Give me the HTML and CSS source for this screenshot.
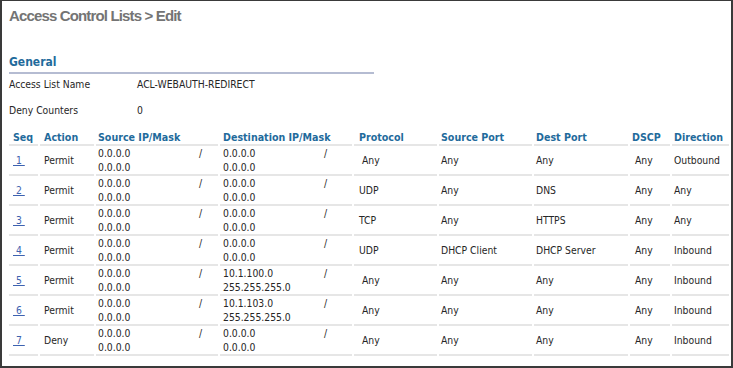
FILE: index.html
```html
<!DOCTYPE html>
<html lang="en">
<head>
    <meta charset="UTF-8">
    <meta name="viewport" content="width=device-width, initial-scale=1.0">
    <title>Access Control Lists &gt; Edit</title>
    <link rel="stylesheet" href="styles.css">
</head>
<body>
    <h1 class="page-title">Access Control Lists &gt; Edit</h1>

    <section class="general">
        <h2>General</h2>
        <div class="info-row">
            <span class="info-label">Access List Name</span>
            <span>ACL-WEBAUTH-REDIRECT</span>
        </div>
        <div class="info-row">
            <span class="info-label">Deny Counters</span>
            <span>0</span>
        </div>
    </section>

    <table class="rules">
        <colgroup>
            <col class="c-seq">
            <col class="c-action">
            <col class="c-src">
            <col class="c-dst">
            <col class="c-proto">
            <col class="c-sport">
            <col class="c-dport">
            <col class="c-dscp">
            <col class="c-dir">
        </colgroup>
        <thead>
            <tr>
                <th>Seq</th>
                <th>Action</th>
                <th>Source IP/Mask</th>
                <th>Destination IP/Mask</th>
                <th>Protocol</th>
                <th>Source Port</th>
                <th>Dest Port</th>
                <th>DSCP</th>
                <th>Direction</th>
            </tr>
        </thead>
        <tbody>
            <tr>
                <td><a href="#">&nbsp;1&nbsp;</a></td>
                <td>Permit</td>
                <td><div class="ip"><span class="addr">0.0.0.0<br>0.0.0.0</span><span class="slash">/</span></div></td>
                <td><div class="ip"><span class="addr">0.0.0.0<br>0.0.0.0</span><span class="slash">/</span></div></td>
                <td>&nbsp;Any</td>
                <td>Any</td>
                <td>Any</td>
                <td>&nbsp;Any</td>
                <td>Outbound</td>
            </tr>
            <tr>
                <td><a href="#">&nbsp;2&nbsp;</a></td>
                <td>Permit</td>
                <td><div class="ip"><span class="addr">0.0.0.0<br>0.0.0.0</span><span class="slash">/</span></div></td>
                <td><div class="ip"><span class="addr">0.0.0.0<br>0.0.0.0</span><span class="slash">/</span></div></td>
                <td>UDP</td>
                <td>Any</td>
                <td>DNS</td>
                <td>&nbsp;Any</td>
                <td>Any</td>
            </tr>
            <tr>
                <td><a href="#">&nbsp;3&nbsp;</a></td>
                <td>Permit</td>
                <td><div class="ip"><span class="addr">0.0.0.0<br>0.0.0.0</span><span class="slash">/</span></div></td>
                <td><div class="ip"><span class="addr">0.0.0.0<br>0.0.0.0</span><span class="slash">/</span></div></td>
                <td>TCP</td>
                <td>Any</td>
                <td>HTTPS</td>
                <td>&nbsp;Any</td>
                <td>Any</td>
            </tr>
            <tr>
                <td><a href="#">&nbsp;4&nbsp;</a></td>
                <td>Permit</td>
                <td><div class="ip"><span class="addr">0.0.0.0<br>0.0.0.0</span><span class="slash">/</span></div></td>
                <td><div class="ip"><span class="addr">0.0.0.0<br>0.0.0.0</span><span class="slash">/</span></div></td>
                <td>UDP</td>
                <td>DHCP Client</td>
                <td>DHCP Server</td>
                <td>&nbsp;Any</td>
                <td>Inbound</td>
            </tr>
            <tr>
                <td><a href="#">&nbsp;5&nbsp;</a></td>
                <td>Permit</td>
                <td><div class="ip"><span class="addr">0.0.0.0<br>0.0.0.0</span><span class="slash">/</span></div></td>
                <td><div class="ip"><span class="addr">10.1.100.0<br>255.255.255.0</span><span class="slash">/</span></div></td>
                <td>&nbsp;Any</td>
                <td>Any</td>
                <td>Any</td>
                <td>&nbsp;Any</td>
                <td>Inbound</td>
            </tr>
            <tr>
                <td><a href="#">&nbsp;6&nbsp;</a></td>
                <td>Permit</td>
                <td><div class="ip"><span class="addr">0.0.0.0<br>0.0.0.0</span><span class="slash">/</span></div></td>
                <td><div class="ip"><span class="addr">10.1.103.0<br>255.255.255.0</span><span class="slash">/</span></div></td>
                <td>&nbsp;Any</td>
                <td>Any</td>
                <td>Any</td>
                <td>&nbsp;Any</td>
                <td>Inbound</td>
            </tr>
            <tr>
                <td><a href="#">&nbsp;7&nbsp;</a></td>
                <td>Deny</td>
                <td><div class="ip"><span class="addr">0.0.0.0<br>0.0.0.0</span><span class="slash">/</span></div></td>
                <td><div class="ip"><span class="addr">0.0.0.0<br>0.0.0.0</span><span class="slash">/</span></div></td>
                <td>&nbsp;Any</td>
                <td>Any</td>
                <td>Any</td>
                <td>&nbsp;Any</td>
                <td>Inbound</td>
            </tr>
        </tbody>
    </table>
</body>
</html>
```

FILE: styles.css
```css
html {
    background: #fff;
}

body {
    margin: 0;
    width: 733px;
    height: 368px;
    box-sizing: border-box;
    border: 2px solid #3a3a3a;
    border-top-width: 1px;
    padding: 5px 0 0 7px;
    font-family: "DejaVu Sans Condensed", "DejaVu Sans", sans-serif;
    font-stretch: condensed;
    font-size: 10.3px;
    line-height: 14px;
    color: #262626;
    background: #fff;
}

.page-title {
    margin: 0;
    font-family: "Liberation Sans", Arial, sans-serif;
    font-stretch: normal;
    font-size: 15px;
    line-height: 20px;
    letter-spacing: -0.85px;
    font-weight: bold;
    color: #747474;
}

.general {
    width: 365px;
    margin-top: 28px;
}

.general h2 {
    margin: 0;
    padding-bottom: 2px;
    font-size: 12px;
    line-height: 16px;
    font-weight: bold;
    color: #1f6b9c;
    border-bottom: 2px solid #b5bcd2;
}

.info-row {
    display: flex;
    margin-top: 12px;
}

.info-row:first-of-type {
    margin-top: 3px;
}

.info-label {
    width: 128px;
}

.rules {
    margin: 13px 0 0 -2px;
    width: 724px;
    table-layout: fixed;
    border-collapse: separate;
    border-spacing: 2px 0;
}

.c-seq { width: 29px; }
.c-action { width: 54px; }
.c-src { width: 122px; }
.c-dst { width: 132px; }
.c-proto { width: 83px; }
.c-sport { width: 93px; }
.c-dport { width: 94px; }
.c-dscp { width: 40px; }
.c-dir { width: 57px; }

.rules th,
.rules td {
    padding: 0 0 0 2px;
    text-align: left;
    vertical-align: middle;
    white-space: nowrap;
    border-bottom: 2px solid #e6e6e6;
}

.rules th {
    font-size: 10.6px;
    font-weight: bold;
    color: #1f6b9c;
}

.rules td {
    height: 28px;
}

.rules th:nth-child(1),
.rules td:nth-child(1),
.rules th:nth-child(2),
.rules td:nth-child(2) {
    padding-left: 4px;
}

.rules th:nth-child(4),
.rules td:nth-child(4) {
    padding-left: 3px;
}

.rules th:nth-child(5),
.rules td:nth-child(5) {
    padding-left: 5px;
}

.rules a {
    color: #3d62b0;
    text-decoration: underline;
}

.ip {
    display: flex;
    align-items: flex-start;
}

.addr {
    width: 101px;
}

.slash {
    line-height: 14px;
}
```
